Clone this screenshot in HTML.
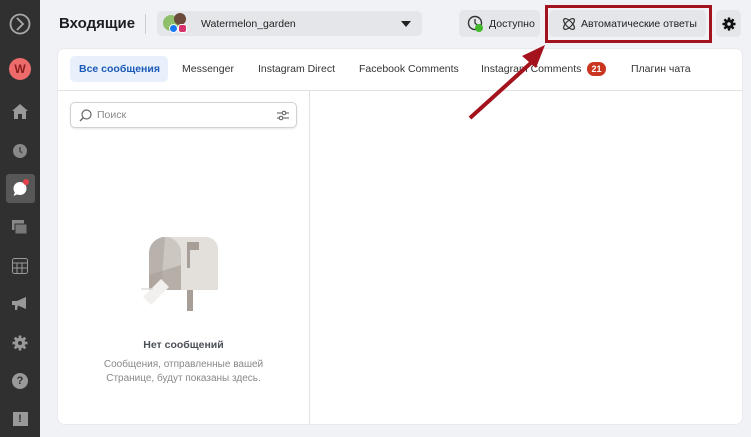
<!DOCTYPE html>
<html><head><meta charset="utf-8"><style>
*{box-sizing:border-box;margin:0;padding:0}
body{width:751px;height:437px;overflow:hidden;background:#f0f2f5;font-family:"Liberation Sans",sans-serif;position:relative;color:#1c1e21}
.sb{position:absolute;left:0;top:0;width:40px;height:437px;background:#303030}
.ic{position:absolute;left:0;width:40px;display:flex;justify-content:center;align-items:center}
.abs{position:absolute}
.btn{position:absolute;background:#e4e6e9;border-radius:5px;font-size:10.5px;display:flex;align-items:center}
.card{position:absolute;left:58px;top:49px;width:684px;height:375px;background:#fff;border-radius:6px;box-shadow:0 0 1px rgba(0,0,0,.2)}
.tab{position:absolute;top:63px;font-size:10.5px;color:#333}
</style></head><body>
<svg width="0" height="0" style="position:absolute"><defs>
<g id="gear"><g fill="currentColor"><rect x="6.6" y="0.5" width="2.8" height="15" rx=".5"/><rect x="6.6" y="0.5" width="2.8" height="15" rx=".5" transform="rotate(45 8 8)"/><rect x="6.6" y="0.5" width="2.8" height="15" rx=".5" transform="rotate(90 8 8)"/><rect x="6.6" y="0.5" width="2.8" height="15" rx=".5" transform="rotate(135 8 8)"/><circle cx="8" cy="8" r="5.3"/></g></g>
</defs></svg>
<div class="sb">
 <div class="ic" style="top:13px"><svg width="22" height="22" viewBox="0 0 22 22"><circle cx="11" cy="11" r="9.5" fill="none" stroke="#aaa" stroke-width="1.8"/><path d="M8 5l6 6-6 6" fill="none" stroke="#aaa" stroke-width="1.8"/></svg></div>
 <div class="ic" style="top:58px"><div style="width:22px;height:22px;border-radius:50%;background:#ee6b6b;color:#8a1d1d;font-weight:bold;font-size:12px;display:flex;align-items:center;justify-content:center">W</div></div>
 <div class="ic" style="top:104px"><svg width="16" height="15" viewBox="0 0 16 15"><path d="M8 0L0 7h2v8h4v-5h4v5h4V7h2z" fill="#999"/></svg></div>
 <div class="ic" style="top:143px"><svg width="16" height="16"><circle cx="8" cy="8" r="7" fill="#888"/><path d="M8 4v4l2 2" stroke="#444" fill="none" stroke-width="1.5"/></svg></div>
 <div class="ic" style="top:174px"><div style="width:29px;height:29px;background:#575757;border-radius:3px;display:flex;align-items:center;justify-content:center;position:relative"><svg width="18" height="18"><circle cx="9" cy="8.5" r="6.5" fill="#fff"/><path d="M4 12l-1.5 4 4.5-2z" fill="#fff"/></svg><div style="position:absolute;right:6px;top:5px;width:6px;height:6px;border-radius:50%;background:#e2434b"></div></div></div>
 <div class="ic" style="top:220px"><svg width="16" height="15"><rect x="0" y="0" width="12" height="10" fill="#888"/><rect x="3" y="4" width="12" height="10" fill="#777" stroke="#303030"/></svg></div>
 <div class="ic" style="top:258px"><svg width="16" height="16"><rect x="0.5" y="0.5" width="15" height="15" rx="2" fill="none" stroke="#999"/><path d="M0 5h16M0 10h16M5 5v11M10 5v11" stroke="#999"/></svg></div>
 <div class="ic" style="top:297px"><svg width="16" height="14"><path d="M0 4h5l9-4v12l-9-4H0zM3 8h3l-1 5H3z" fill="#999"/></svg></div>
 <div class="ic" style="top:335px"><svg width="16" height="16" viewBox="0 0 16 16" style="color:#999"><use href="#gear"/><circle cx="8" cy="8" r="2" fill="#303030"/></svg></div>
 <div class="ic" style="top:373px"><div style="width:16px;height:16px;border-radius:50%;background:#999;color:#303030;font-weight:bold;font-size:11px;text-align:center;line-height:16px">?</div></div>
 <div class="ic" style="top:412px"><div style="width:15px;height:14px;background:#999;color:#303030;font-weight:bold;font-size:11px;text-align:center;line-height:14px">!</div></div>
</div>

<div class="abs" style="left:59px;top:15px;font-size:15px;font-weight:bold;color:#1c1e21">Входящие</div>
<div class="abs" style="left:145px;top:14px;width:1px;height:20px;background:#ccc"></div>
<div class="btn" style="left:157px;top:11px;width:265px;height:25px">
 <div style="position:relative;width:30px;height:22px;margin-left:6px">
  <div style="position:absolute;left:0;top:2px;width:16px;height:16px;border-radius:50%;background:#8fbf6a"></div>
  <div style="position:absolute;left:11px;top:0;width:12px;height:12px;border-radius:50%;background:#6b4a3a"></div>
  <div style="position:absolute;left:6px;top:11px;width:9px;height:9px;border-radius:50%;background:#1877f2;border:1px solid #fff"></div>
  <div style="position:absolute;left:15px;top:11px;width:9px;height:9px;border-radius:3px;background:#d6336c;border:1px solid #fff"></div>
 </div>
 <span style="margin-left:8px;font-size:10.5px;color:#222">Watermelon_garden</span>
 <div style="position:absolute;right:11px;top:10px;width:0;height:0;border-left:5px solid transparent;border-right:5px solid transparent;border-top:6px solid #222"></div>
</div>

<div class="btn" style="left:459px;top:10px;width:81px;height:27px">
 <svg style="margin-left:8px" width="16" height="18"><circle cx="8" cy="8" r="6.5" fill="none" stroke="#333" stroke-width="1.4"/><path d="M8 4v4l2 2" stroke="#333" fill="none" stroke-width="1.3"/><circle cx="12" cy="13" r="4" fill="#42b72a"/></svg>
 <span style="margin-left:6px">Доступно</span>
</div>
<div class="btn" style="left:549px;top:10px;width:157px;height:27px">
 <svg style="margin-left:12px" width="16" height="16" viewBox="0 0 16 16"><g fill="none" stroke="#333" stroke-width="1.2"><ellipse cx="8" cy="8" rx="7" ry="3" transform="rotate(45 8 8)"/><ellipse cx="8" cy="8" rx="7" ry="3" transform="rotate(-45 8 8)"/></g></svg>
 <span style="margin-left:4px">Автоматические ответы</span>
</div>
<div class="abs" style="left:545px;top:5px;width:167px;height:38px;border:3px solid #a3121d"></div>
<div class="btn" style="left:716px;top:10px;width:25px;height:27px;justify-content:center">
 <svg width="14" height="14" viewBox="0 0 16 16" style="color:#111"><use href="#gear"/><circle cx="8" cy="8" r="2" fill="#e4e6e9"/></svg>
</div>

<div class="card">
 <div class="abs" style="left:12px;top:7px;width:98px;height:26px;background:#e7f0fb;border-radius:5px"></div>
 <div class="abs" style="left:0;top:41px;width:684px;height:1px;background:#e2e2e2"></div>
 <div class="abs" style="left:251px;top:41px;width:1px;height:334px;background:#e2e2e2"></div>
 <div class="abs" style="left:12px;top:53px;width:227px;height:26px;border:1px solid #cfd2d6;border-radius:5px;box-shadow:0 1px 2px rgba(0,0,0,.1)">
  <svg class="abs" style="left:8px;top:6px" width="13" height="13"><circle cx="7.5" cy="5.5" r="4.5" fill="none" stroke="#666" stroke-width="1.2"/><path d="M4.5 8.5L1 12" stroke="#666" stroke-width="1.3"/></svg>
  <span class="abs" style="left:26px;top:6px;font-size:10.5px;color:#888">Поиск</span>
  <svg class="abs" style="left:206px;top:7px" width="12" height="11"><path d="M0 3h12M0 8h12" stroke="#555"/><circle cx="7" cy="3" r="1.8" fill="#fff" stroke="#555"/><circle cx="4" cy="8" r="1.8" fill="#fff" stroke="#555"/></svg>
 </div>
 <svg class="abs" style="left:83px;top:186px" width="80" height="76" viewBox="0 0 80 76">
  <path d="M20 2h45a12 12 0 0 1 12 12v41H20z" fill="#e3dfdb"/>
  <path d="M8 55V18A16 16 0 0 1 40 18v37z" fill="#b9b1ab"/>
  <path d="M24 2A16 16 0 0 1 40 18v37H20z" fill="#d6d0ca" opacity=".7"/>
  <path d="M8 55V40l32-10v25z" fill="#a79e98" opacity=".6"/>
  <rect x="46" y="7" width="12" height="8" fill="#a79e98"/><rect x="46" y="7" width="3" height="26" fill="#a79e98"/>
  <rect x="46" y="55" width="6" height="21" fill="#a79e98"/>
  <path d="M2 62l18-18 8 8-18 18z" fill="#f2f0ee"/><path d="M0 54h12" stroke="#ddd" stroke-width="1.5"/>
 </svg>
 <div class="abs" style="left:0;top:290px;width:251px;text-align:center;font-size:10.5px;font-weight:bold;color:#4b4f56">Нет сообщений</div>
 <div class="abs" style="left:0;top:309px;width:251px;text-align:center;font-size:10px;line-height:14px;color:#888">Сообщения, отправленные вашей<br>Странице, будут показаны здесь.</div>
</div>
<div class="tab" style="left:79px;color:#1d59b7;font-weight:bold">Все сообщения</div>
<div class="tab" style="left:182px">Messenger</div>
<div class="tab" style="left:258px">Instagram Direct</div>
<div class="tab" style="left:359px">Facebook Comments</div>
<div class="tab" style="left:481px">Instagram Comments</div>
<div class="abs" style="left:587px;top:62px;width:19px;height:14px;border-radius:7px;background:#c9351f;color:#fff;font-size:9px;font-weight:bold;text-align:center;line-height:14px">21</div>
<div class="tab" style="left:631px">Плагин чата</div>
<svg class="abs" style="left:0;top:0" width="751" height="437"><path d="M470 118L532 62" stroke="#a3121d" stroke-width="4"/><path d="M545 45L522 56L536 68z" fill="#a3121d"/></svg>
</body></html>
